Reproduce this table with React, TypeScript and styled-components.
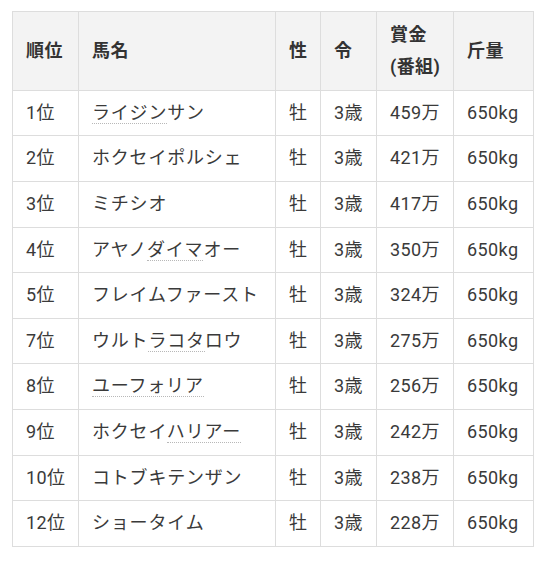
import React from "react";
import styled, { createGlobalStyle } from "styled-components";

const GlobalStyle = createGlobalStyle`
  html, body {
    margin: 0;
    padding: 0;
    background: #ffffff;
  }
  body {
    font-family: "Roboto", "Noto Sans CJK JP", sans-serif;
    color: #333333;
  }
`;

const Page = styled.div`
  padding: 11px 0 0 12px;
`;

const Table = styled.table`
  border-collapse: collapse;
  table-layout: fixed;
  width: 521px;
  font-size: 18px;
  line-height: 31.6px;
  letter-spacing: 0.4px;
`;

const Th = styled.th<{ $w: number }>`
  box-sizing: border-box;
  width: ${(p) => p.$w}px;
  background: #f3f3f3;
  border: 1px solid #dddddd;
  padding: 7px 0 7.6px 13px;
  text-align: left;
  font-weight: 700;
  color: #333333;
  vertical-align: middle;
  white-space: nowrap;
`;

const Td = styled.td<{ $wide?: boolean }>`
  border: 1px solid #dddddd;
  padding: 6px 0 7px 13px;
  text-align: left;
  vertical-align: middle;
  white-space: nowrap;
  overflow: hidden;
  color: #3a3a3a;
  letter-spacing: ${(p) => (p.$wide ? "0.8px" : "0.4px")};
`;

const Dotted = styled.span`
  border-bottom: 1px dotted #b8b8b8;
`;

type Row = {
  rank: string;
  name: [string, string, string];
  prize: string;
};

const rows: Row[] = [
  { rank: "1位", name: ["", "ライジン", "サン"], prize: "459万" },
  { rank: "2位", name: ["ホクセイポルシェ", "", ""], prize: "421万" },
  { rank: "3位", name: ["ミチシオ", "", ""], prize: "417万" },
  { rank: "4位", name: ["アヤノ", "ダイマ", "オー"], prize: "350万" },
  { rank: "5位", name: ["フレイムファースト", "", ""], prize: "324万" },
  { rank: "7位", name: ["ウルト", "ラコタ", "ロウ"], prize: "275万" },
  { rank: "8位", name: ["", "ユーフォリア", ""], prize: "256万" },
  { rank: "9位", name: ["ホクセイ", "ハリアー", ""], prize: "242万" },
  { rank: "10位", name: ["コトブキテンザン", "", ""], prize: "238万" },
  { rank: "12位", name: ["ショータイム", "", ""], prize: "228万" },
];

export default function App() {
  return (
    <>
      <GlobalStyle />
      <Page>
        <Table>
          <thead>
            <tr>
              <Th $w={66}>順位</Th>
              <Th $w={197}>馬名</Th>
              <Th $w={45}>性</Th>
              <Th $w={56}>令</Th>
              <Th $w={77}>
                賞金
                <br />
                (番組)
              </Th>
              <Th $w={80}>斤量</Th>
            </tr>
          </thead>
          <tbody>
            {rows.map((r) => (
              <tr key={r.rank}>
                <Td>{r.rank}</Td>
                <Td $wide>
                  {r.name[0]}
                  {r.name[1] && <Dotted>{r.name[1]}</Dotted>}
                  {r.name[2]}
                </Td>
                <Td>牡</Td>
                <Td>3歳</Td>
                <Td>{r.prize}</Td>
                <Td>650kg</Td>
              </tr>
            ))}
          </tbody>
        </Table>
      </Page>
    </>
  );
}
